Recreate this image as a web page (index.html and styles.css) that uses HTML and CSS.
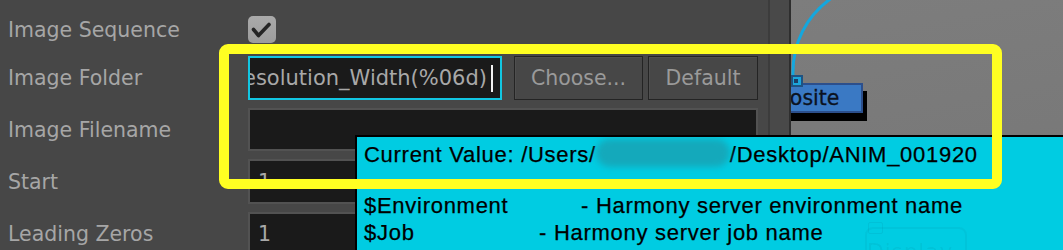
FILE: index.html
```html
<!DOCTYPE html>
<html>
<head>
<meta charset="utf-8">
<link rel="stylesheet" href="styles.css">
</head>
<body>
<div class="app">
  <div class="panel">
    <div class="form">
      <div class="label">Image Sequence</div>
      <div class="field">
        <span class="checkbox">
          <svg width="28" height="27" viewBox="0 0 28 27"><path d="M5.5 13.5 L10.5 19.5 L21 8.5" fill="none" stroke="#252525" stroke-width="3.6" stroke-linecap="round" stroke-linejoin="round"/></svg>
        </span>
      </div>

      <div class="label">Image Folder</div>
      <div class="field folder-row">
        <div class="input focused"><span class="val">ANIM_$Resolution_Width(%06d)</span><span class="caret"></span></div>
        <div class="btn btn-choose">Choose...</div>
        <div class="btn btn-default">Default</div>
      </div>

      <div class="label">Image Filename</div>
      <div class="field"><div class="input"></div></div>

      <div class="label">Start</div>
      <div class="field"><div class="input"><span class="val">1</span></div></div>

      <div class="label">Leading Zeros</div>
      <div class="field"><div class="input"><span class="val">1</span></div></div>
    </div>
  </div>
  <div class="splitter"></div>
  <div class="graph">
    <svg class="wire" width="80" height="80" viewBox="0 0 80 80"><path d="M2 76 C1 45 14 15 45 -5" fill="none" stroke="#14a7de" stroke-width="3"/></svg>
    <div class="node">Composite</div>
    <div class="port"><span class="port-dot"></span></div>
  </div>
</div>

<div class="tooltip">
  <div class="ghost-box"></div>
  <div class="ghost-check"></div>
  <div class="ghost-text">Display</div>
  <div class="tip-line tip-current">Current Value: /Users/<span class="redact"></span>/Desktop/ANIM_001920</div>
  <div class="tip-line"><span class="var var-env">$Environment</span>- Harmony server environment name</div>
  <div class="tip-line"><span class="var var-job">$Job</span>- Harmony server job name</div>
  <div class="tip-line"><span class="var var-scene">$Scene</span>- Harmony scene name</div>
</div>

<div class="highlight"></div>
</body>
</html>
```

FILE: styles.css
```css
html, body {
  margin: 0;
  padding: 0;
  background: #474747;
  overflow: hidden;
}

.app {
  display: flex;
  width: 1063px;
  height: 250px;
  overflow: hidden;
  font-family: "DejaVu Sans", sans-serif;
}

.panel {
  width: 768px;
  flex: none;
  background: #474747;
  box-sizing: border-box;
  padding: 12px 10px 0 8px;
}

.form {
  display: grid;
  grid-template-columns: 240px 510px;
  grid-template-rows: 36px 44px 43px 45px 44px;
  row-gap: 8px;
}

.label {
  display: flex;
  align-items: center;
  color: #a6a6a6;
  font-size: 20.5px;
  white-space: nowrap;
}

.field {
  display: flex;
  align-items: stretch;
}

.checkbox {
  display: block;
  width: 28px;
  height: 27px;
  border-radius: 5px;
  background: linear-gradient(#aaaaaa, #9c9c9c);
  align-self: center;
  margin-top: -2px;
}

.checkbox svg {
  display: block;
}

.input {
  flex: 1;
  box-sizing: border-box;
  background: #1a1a1a;
  border: 2px solid #525252;
  display: flex;
  align-items: center;
  overflow: hidden;
  color: #a8a8a8;
  font-size: 20.5px;
  padding-left: 8px;
  white-space: nowrap;
}

.input.focused {
  flex: none;
  width: 254px;
  border-color: #12c6e2;
  justify-content: flex-end;
  padding-left: 0;
  padding-right: 7px;
  font-size: 21px;
}

.caret {
  display: block;
  width: 2px;
  height: 27px;
  background: #f2f2f2;
  margin-left: 4px;
  flex: none;
}

.val {
  flex: none;
}

.btn {
  box-sizing: border-box;
  display: flex;
  align-items: center;
  justify-content: center;
  background: #474747;
  border: 1px solid #242424;
  box-shadow: inset 1px 1px 0 #4f4f4f;
  color: #9a9a9a;
  font-size: 20.5px;
}

.btn-choose {
  width: 129px;
  margin-left: 12px;
}

.btn-default {
  width: 110px;
  margin-left: 5px;
}

.splitter {
  flex: none;
  width: 19px;
  background: #494949;
  border-left: 2px solid #3c3c3c;
  border-right: 2px solid #2e2e2e;
}

.graph {
  flex: 1;
  position: relative;
  overflow: hidden;
  background: linear-gradient(170deg, #7d7d7d, #767676);
}

.wire {
  position: absolute;
  left: 0;
  top: 0;
}

.node {
  position: absolute;
  left: -69px;
  top: 83px;
  width: 141px;
  height: 30px;
  box-sizing: border-box;
  background: #3a79c4;
  border: 2px solid #2c4f8c;
  box-shadow: 4px 8px 0 #000;
  padding-left: 6px;
  font-size: 20.5px;
  line-height: 26px;
  color: #0b1220;
  white-space: nowrap;
  -webkit-text-stroke: 0.3px #0b1220;
}

.port {
  position: absolute;
  left: 0;
  top: 75px;
  width: 12px;
  height: 12px;
  box-sizing: border-box;
  border: 2px solid #1f5382;
  background: #1ba6dc;
}

.port-dot {
  position: absolute;
  left: 1px;
  top: 2px;
  width: 4px;
  height: 4px;
  background: #1d3f66;
}

.tooltip {
  position: absolute;
  left: 355px;
  top: 135px;
  width: 708px;
  height: 125px;
  box-sizing: border-box;
  background: #00cce2;
  border-top: 2px solid #000;
  border-left: 2px solid #000;
  padding: 2px 0 0 7px;
  font-family: "Liberation Sans", Arial, sans-serif;
  font-size: 22px;
  letter-spacing: 0.72px;
  line-height: 27px;
  color: #000;
  -webkit-text-stroke: 0.25px #000;
  white-space: nowrap;
  overflow: hidden;
}

.tip-line {
  position: relative;
}

.tip-current {
  margin-bottom: 24px;
}

.redact {
  display: inline-block;
  width: 134px;
  height: 28px;
  vertical-align: -5px;
  background: #14a9bb;
  border-radius: 14px;
  filter: blur(3px);
}

.var {
  display: inline-block;
}

.var-env {
  width: 217px;
}

.var-job {
  width: 175px;
}

.var-scene {
  width: 200px;
}

.ghost-box {
  position: absolute;
  left: 508px;
  top: 90px;
  width: 98px;
  height: 40px;
  border: 2px solid rgba(0, 60, 80, 0.05);
  border-radius: 8px;
}

.ghost-check {
  position: absolute;
  left: 511px;
  top: 85px;
  width: 13px;
  height: 10px;
  border: 1px solid rgba(0, 60, 80, 0.07);
  border-radius: 2px;
}

.ghost-text {
  position: absolute;
  left: 510px;
  top: 101px;
  font-family: "DejaVu Sans", sans-serif;
  font-size: 22px;
  color: rgba(0, 60, 80, 0.07);
  -webkit-text-stroke: 0;
}

.highlight {
  position: absolute;
  left: 219px;
  top: 44px;
  width: 783px;
  height: 145px;
  box-sizing: border-box;
  border: 10px solid #ffff22;
  border-radius: 9px;
}
```
